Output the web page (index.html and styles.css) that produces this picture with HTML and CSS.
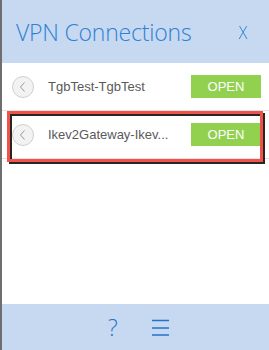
FILE: index.html
```html
<!DOCTYPE html>
<html>
<head>
<meta charset="utf-8">
<link rel="stylesheet" href="styles.css">
</head>
<body>
<div class="app">
  <header class="header">
    <h1 class="title">VPN Connections</h1>
    <span class="close">X</span>
  </header>
  <main class="list">
    <div class="row">
      <span class="back">
        <svg width="22" height="22" viewBox="0 0 22 22"><circle cx="11" cy="11" r="10.5" fill="#f2f2f2" stroke="#cfcfcf"/><path d="M12.5 6.5 L8.5 11 L12.5 15.5" fill="none" stroke="#9a9a9a" stroke-width="1"/></svg>
      </span>
      <span class="name">TgbTest-TgbTest</span>
      <span class="open">OPEN</span>
    </div>
    <div class="row row-marked">
      <span class="back">
        <svg width="22" height="22" viewBox="0 0 22 22"><circle cx="11" cy="11" r="10.5" fill="#f2f2f2" stroke="#cfcfcf"/><path d="M12.5 6.5 L8.5 11 L12.5 15.5" fill="none" stroke="#9a9a9a" stroke-width="1"/></svg>
      </span>
      <span class="name">Ikev2Gateway-Ikev...</span>
      <span class="open">OPEN</span>
      <span class="mark"></span>
    </div>
  </main>
  <footer class="footer">
    <span class="help">?</span>
    <span class="menu">
      <svg width="17" height="17" viewBox="0 0 17 17"><path d="M0 1.5H17M0 9H17M0 16H17" stroke="#1f74cc" stroke-width="1.5"/></svg>
    </span>
  </footer>
</div>
</body>
</html>
```

FILE: styles.css
```css
html, body {
  margin: 0;
  padding: 0;
  background: #fff;
}
.app {
  width: 267px;
  height: 350px;
  border-left: 2px solid #6e6e6e;
  display: flex;
  flex-direction: column;
  font-family: "Liberation Sans", Arial, sans-serif;
}
.header {
  height: 63px;
  background: #c6d9f0;
  display: flex;
  align-items: flex-start;
  justify-content: space-between;
  box-sizing: border-box;
  padding: 17px 21px 0 14px;
  flex: none;
}
.title {
  margin: 0;
  font-family: "Open Sans", sans-serif;
  font-weight: 300;
  font-size: 23px;
  line-height: 30px;
  color: #2f80d6;
  letter-spacing: -0.2px;
}
.close {
  font-family: "Open Sans", sans-serif;
  font-weight: 300;
  font-size: 19px;
  line-height: 30px;
  color: #2f80d6;
  transform: scaleX(0.85);
}
.list {
  flex: 1;
  background: #fff;
}
.row {
  height: 48px;
  box-sizing: border-box;
  border-bottom: 1px solid #e3e3e3;
  display: flex;
  align-items: center;
  padding: 0 8px 0 10px;
  position: relative;
}
.back {
  width: 22px;
  height: 22px;
  display: flex;
  flex: none;
}
.name {
  margin-left: 14px;
  flex: 1;
  font-size: 13px;
  color: #5a5a5a;
}
.open {
  width: 70px;
  height: 23px;
  background: #92d050;
  color: #fff;
  font-size: 13px;
  display: flex;
  align-items: center;
  justify-content: center;
  flex: none;
}
.mark {
  position: absolute;
  left: 5px;
  top: 0;
  width: 256px;
  height: 51px;
  box-sizing: border-box;
  border: 3px solid #f0524a;
  filter: drop-shadow(2px 2px 0.6px rgba(0, 0, 0, 0.85));
}
.footer {
  height: 46px;
  flex: none;
  background: #c6d9f0;
  display: flex;
  align-items: center;
  padding-left: 106px;
  gap: 34px;
}
.help {
  font-family: "Open Sans", sans-serif;
  font-weight: 300;
  font-size: 23px;
  line-height: 24px;
  color: #1f74cc;
}
.menu {
  display: flex;
}
```
